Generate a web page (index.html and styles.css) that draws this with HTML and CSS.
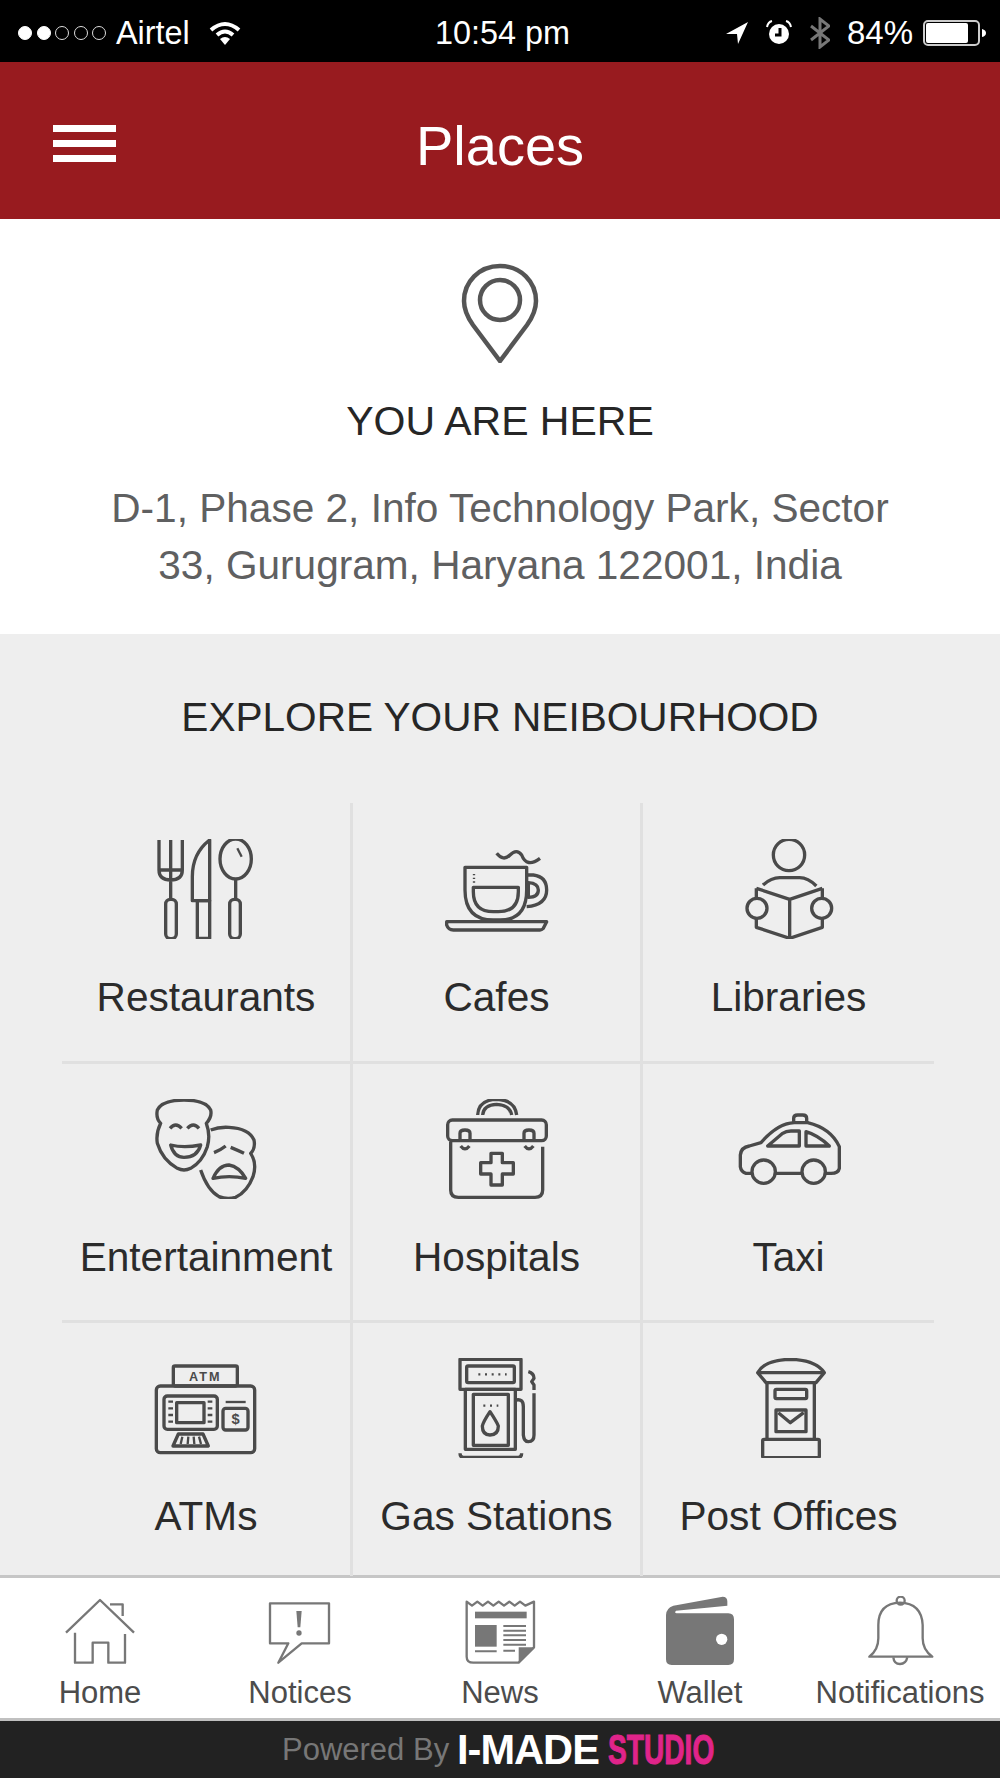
FILE: index.html
```html
<!DOCTYPE html>
<html lang="en">
<head>
    <meta charset="UTF-8">
    <meta name="viewport" content="width=device-width, initial-scale=1.0">
    <title>Places</title>
    <link rel="stylesheet" href="styles.css">
</head>
<body>
    <!-- iOS status bar -->
    <div class="status-bar">
        <div class="status-left">
            <span class="signal">
                <i class="dot on"></i><i class="dot on"></i><i class="dot"></i><i class="dot"></i><i class="dot"></i>
            </span>
            <span class="carrier">Airtel</span>
            <svg class="wifi" width="32" height="24" viewBox="0 0 32 24">
                <path class="wifi-arc" d="M2 9 Q16 -3 30 9"/>
                <path class="wifi-arc" d="M8 14 Q16 7 24 14"/>
                <path class="wifi-fill" d="M16 24 L11 18 Q16 14 21 18 Z"/>
            </svg>
        </div>
        <div class="status-time">10:54 pm</div>
        <div class="status-right">
            <svg width="22" height="22" viewBox="0 0 22 22"><path class="wifi-fill" d="M22 0 L0 12 L11 12 L12 22 Z"/></svg>
            <svg class="alarm" width="28" height="28" viewBox="0 0 28 28">
                <circle class="wifi-fill" cx="14" cy="15" r="10"/>
                <path class="alarm-hand" d="M15 9 V16 H10"/>
                <path class="alarm-ear" d="M2 8 Q3 3 7 2 M26 8 Q25 3 21 2"/>
            </svg>
            <svg class="bluetooth" width="20" height="32" viewBox="0 0 20 32"><path d="M1 9 L19 23 L10 30 V2 L19 9 L1 23"/></svg>
            <span class="battery-pct">84%</span>
            <svg width="64" height="26" viewBox="0 0 64 26">
                <rect class="battery-case" x="1" y="1" width="55" height="24" rx="4"/>
                <rect class="wifi-fill" x="3" y="3" width="42" height="20" rx="2"/>
                <path class="wifi-fill" d="M59 9 Q63 10 63 13 Q63 16 59 17 Z"/>
            </svg>
        </div>
    </div>

    <header class="app-header">
        <div class="hamburger"><span></span><span></span><span></span></div>
        <h1>Places</h1>
    </header>

    <section class="here">
        <svg class="pin" width="80" height="100" viewBox="0 0 80 100">
            <path d="M40 3 C19 3 4 19 4 38 C4 48 8 55 13 62 L40 98 L67 62 C72 55 76 48 76 38 C76 19 61 3 40 3 Z"/>
            <circle cx="40" cy="37" r="20"/>
        </svg>
        <h2>YOU ARE HERE</h2>
        <p class="address">D-1, Phase 2, Info Technology Park, Sector 33, Gurugram, Haryana 122001, India</p>
    </section>

    <section class="explore">
        <h2>EXPLORE YOUR NEIBOURHOOD</h2>
        <div class="place-grid">
            <div class="place">
                <svg class="place-icon" viewBox="261 87 360 300">
                    <path d="M300 90 V180 Q300 210 335 210 Q370 210 370 180 V90 M335 90 V268 M300 180 H370"/>
                    <rect x="320" y="268" width="32" height="118" rx="14"/>
                    <path d="M452 90 Q400 130 400 200 V272 H452 Z"/>
                    <rect x="415" y="272" width="37" height="113"/>
                    <ellipse cx="530" cy="147" rx="47" ry="60"/>
                    <path class="thin" d="M535 115 L548 140"/>
                    <path d="M530 207 V268"/>
                    <rect x="512" y="268" width="32" height="118" rx="14"/>
                </svg>
                <span>Restaurants</span>
            </div>
            <div class="place">
                <svg class="place-icon" viewBox="1311 87 360 300">
                    <path d="M1395 172 H1580 V240 Q1580 330 1500 330 H1480 Q1395 330 1395 240 Z"/>
                    <path d="M1420 232 H1555 V245 Q1555 305 1495 305 H1480 Q1420 305 1420 245 Z"/>
                    <path d="M1580 195 H1600 Q1640 200 1640 240 Q1640 285 1580 290"/>
                    <path d="M1585 218 Q1615 220 1615 240 Q1615 262 1585 262 Z"/>
                    <path d="M1340 335 H1640 L1630 355 Q1625 360 1620 360 H1360 Q1345 360 1340 345 Z"/>
                    <path d="M1490 130 Q1510 155 1530 135 Q1550 115 1565 135 Q1580 175 1620 145"/>
                    <path class="thin" stroke-dasharray="4 7" d="M1422 192 V220"/>
                </svg>
                <span>Cafes</span>
            </div>
            <div class="place">
                <svg class="place-icon" viewBox="688 87 360 300">
                    <circle cx="868" cy="135" r="47"/>
                    <path d="M790 225 Q815 203 840 203 H900 Q925 203 950 228"/>
                    <path d="M870 268 V382 M770 235 L870 268 L968 235 M770 235 V265 M968 235 V265 M770 322 V352 L870 385 L968 352 V322"/>
                    <circle cx="772" cy="295" r="30"/>
                    <circle cx="966" cy="295" r="30"/>
                </svg>
                <span>Libraries</span>
            </div>
            <div class="place">
                <svg class="place-icon" viewBox="141 87 360 300">
                    <path d="M255 90 Q190 90 175 120 Q170 145 185 160 Q170 190 175 220 Q190 270 235 295 Q255 305 275 295 Q310 275 325 230 Q335 195 322 160 Q340 140 335 120 Q320 90 255 90 Z"/>
                    <path d="M213 175 Q230 155 248 175 M265 175 Q283 155 300 175"/>
                    <path d="M215 225 Q255 235 305 225 Q295 262 255 262 Q225 262 215 225 Z"/>
                    <path d="M335 180 Q360 170 390 172 Q450 175 465 210 Q470 235 455 250 Q475 280 462 320 Q445 365 410 382 Q385 390 360 380 Q325 360 305 300"/>
                    <path d="M345 248 Q365 240 380 228 M395 232 Q415 240 435 250"/>
                    <path d="M342 325 Q360 285 390 285 Q420 290 440 325 Q390 315 342 325 Z"/>
                </svg>
                <span>Entertainment</span>
            </div>
            <div class="place">
                <svg class="place-icon" viewBox="1011 87 360 300">
                    <path d="M1133 135 Q1135 90 1190 88 Q1245 90 1250 135 M1148 135 Q1150 105 1190 103 Q1230 105 1235 135"/>
                    <rect x="1043" y="150" width="296" height="62" rx="14"/>
                    <path d="M1052 215 V360 Q1052 382 1075 382 H1305 Q1328 382 1328 360 V230"/>
                    <path d="M1080 212 V190 Q1080 180 1095 180 Q1110 180 1110 190 V212 M1082 228 Q1095 245 1108 228"/>
                    <path d="M1272 212 V190 Q1272 180 1287 180 Q1302 180 1302 190 V212 M1274 228 Q1287 245 1300 228"/>
                    <path d="M1173 250 H1207 V278 H1240 V312 H1207 V345 H1173 V312 H1142 V278 H1173 Z"/>
                </svg>
                <span>Hospitals</span>
            </div>
            <div class="place">
                <svg class="place-icon" viewBox="684 87 360 300">
                    <path d="M750 310 H735 Q720 305 718 290 V255 Q720 232 745 228 L780 218 Q830 160 880 158 H920 Q990 175 1015 230 V295 Q1012 310 990 310 H975 M825 310 H900"/>
                    <circle cx="788" cy="305" r="35"/>
                    <circle cx="938" cy="305" r="35"/>
                    <path d="M878 158 V145 Q878 135 890 135 H905 Q917 135 917 145 V158"/>
                    <path d="M800 228 L845 190 Q855 183 870 183 H895 V228 Z M915 185 Q950 195 985 228 H915 Z"/>
                </svg>
                <span>Taxi</span>
            </div>
            <div class="place">
                <svg class="place-icon" viewBox="51 54 360 300">
                    <rect x="133" y="78" width="192" height="60" rx="5"/>
                    <text class="icon-text" x="229" y="122" text-anchor="middle" font-size="38" letter-spacing="6">ATM</text>
                    <rect x="82" y="138" width="295" height="200" rx="12"/>
                    <rect x="105" y="168" width="160" height="100" rx="10"/>
                    <rect x="143" y="188" width="82" height="60"/>
                    <path class="thin" d="M118 185 H132 M118 205 H132 M118 225 H132 M118 245 H132 M236 185 H250 M236 205 H250 M236 225 H250 M236 245 H250"/>
                    <path d="M132 318 L148 282 H222 L238 318 Z"/>
                    <path class="thin" d="M160 290 L155 312 M178 290 L176 312 M194 290 L196 312 M210 290 L216 312"/>
                    <path class="thin" d="M290 186 H350"/>
                    <rect x="282" y="205" width="75" height="65" rx="8"/>
                    <text class="icon-text" x="320" y="252" text-anchor="middle" font-size="44">$</text>
                </svg>
                <span>ATMs</span>
            </div>
            <div class="place">
                <svg class="place-icon" viewBox="921 54 360 300">
                    <rect x="990" y="58" width="183" height="90"/>
                    <rect x="1010" y="78" width="143" height="50" rx="4"/>
                    <path class="thin" stroke-dasharray="6 14" d="M1045 103 H1130"/>
                    <rect x="1006" y="148" width="150" height="180"/>
                    <rect x="1030" y="163" width="105" height="153"/>
                    <path d="M990 340 Q990 352 1000 352 H1165 Q1175 352 1175 340"/>
                    <path class="thin" stroke-dasharray="6 14" d="M1060 197 H1105"/>
                    <path d="M1080 215 Q1100 245 1105 258 Q1105 285 1080 285 Q1057 285 1057 258 Q1060 245 1080 215 Z"/>
                    <path d="M1158 180 Q1180 175 1180 200 V285 Q1182 305 1195 305 Q1212 305 1212 285 V160 M1195 95 Q1212 100 1212 115 L1205 125 L1212 135 V150"/>
                </svg>
                <span>Gas Stations</span>
            </div>
            <div class="place">
                <svg class="place-icon" viewBox="684 54 360 300">
                    <path d="M770 98 Q790 60 868 58 Q945 60 970 98 L945 128 H795 Z M775 98 H965"/>
                    <path d="M798 128 V298 M940 128 V298"/>
                    <rect x="822" y="148" width="95" height="28" rx="4"/>
                    <rect x="825" y="210" width="90" height="65"/>
                    <path d="M832 218 L868 248 L908 218"/>
                    <rect x="785" y="298" width="170" height="55" rx="4"/>
                </svg>
                <span>Post Offices</span>
            </div>
        </div>
    </section>

    <nav class="tab-bar">
        <div class="tab">
            <svg class="tab-icon" viewBox="180 108 240 216">
                <path d="M198 218 L300 120 L402 218 M330 133 H368 V168 M225 218 V308 H278 V248 H325 V308 H375 V222"/>
            </svg>
            <span>Home</span>
        </div>
        <div class="tab">
            <svg class="tab-icon" viewBox="780 108 240 216">
                <path d="M810 130 H987 V250 H905 L835 308 L865 250 H810 Z"/>
                <path class="solid" d="M889 153 H905 L901 202 H893 Z"/>
                <circle class="solid" cx="897" cy="219" r="8"/>
            </svg>
            <span>Notices</span>
        </div>
        <div class="tab">
            <svg class="tab-icon" viewBox="1380 108 240 216">
                <path d="M1400 125 L1416 137 L1432 125 L1448 137 L1464 125 L1480 137 L1496 125 L1512 137 L1528 125 L1544 137 L1560 125 L1576 137 L1602 125 V262 L1556 308 H1420 Q1400 308 1400 290 Z"/>
                <rect class="solid" x="1425" y="155" width="155" height="20"/>
                <rect class="solid" x="1425" y="195" width="65" height="65"/>
                <path class="thin" d="M1510 198 H1578 M1510 212 H1578 M1510 226 H1578 M1510 240 H1578 M1510 254 H1578 M1425 274 H1490 M1510 272 H1545"/>
                <path class="solid" d="M1602 262 L1556 308 V262 Z"/>
            </svg>
            <span>News</span>
        </div>
        <div class="tab">
            <svg class="tab-icon" viewBox="480 108 240 216">
                <path class="solid" d="M498 165 Q498 145 520 137 L668 110 Q682 110 682 124 V137 L528 152 Q522 158 530 160 H685 Q702 160 702 178 V298 Q702 315 685 315 H515 Q498 315 498 298 Z"/>
                <circle class="hole" cx="665" cy="238" r="17"/>
            </svg>
            <span>Wallet</span>
        </div>
        <div class="tab">
            <svg class="tab-icon" viewBox="1080 108 240 216">
                <circle cx="1202" cy="122" r="12"/>
                <path d="M1108 290 Q1135 270 1135 235 V195 Q1135 130 1200 128 Q1265 130 1268 195 V235 Q1268 270 1297 290 Z"/>
                <path d="M1180 292 Q1182 312 1200 312 Q1218 312 1222 292"/>
            </svg>
            <span>Notifications</span>
        </div>
    </nav>

    <footer class="powered">
        <span class="powered-by">Powered By</span>
        <span class="logo-imade"><b>I-MADE</b></span>
        <span class="logo-studio"><b>STUDIO</b></span>
    </footer>
</body>
</html>
```

FILE: styles.css
```css
* {
    box-sizing: border-box;
}
body {
    margin: 0;
    width: 1000px;
    font-family: "Liberation Sans", Arial, sans-serif;
    background: #eeeeee;
}
h1, h2, p {
    margin: 0;
    font-weight: normal;
}

/* status bar */
.status-bar {
    height: 62px;
    background: #000;
    color: #fff;
    font-size: 32.4px;
    display: grid;
    grid-template-columns: 1fr auto 1fr;
    align-items: center;
    padding: 4px 13px 0 18px;
}
.status-left, .status-right {
    display: flex;
    align-items: center;
}
.status-right {
    justify-content: flex-end;
}
.status-right svg, .status-right span {
    margin-left: 17px;
}
.status-right .battery-pct {
    font-size: 33px;
    margin-left: 17px;
    margin-right: -7px;
}
.signal {
    display: flex;
    gap: 4.5px;
    margin-right: 10px;
}
.dot {
    width: 14px;
    height: 14px;
    border-radius: 50%;
    border: 1.5px solid #ddd;
}
.dot.on {
    background: #fff;
    border-color: #fff;
}
.wifi {
    margin-left: 19px;
}
.wifi-arc {
    fill: none;
    stroke: #fff;
    stroke-width: 4;
}
.wifi-fill {
    fill: #fff;
}
.alarm-hand {
    fill: none;
    stroke: #000;
    stroke-width: 3;
}
.alarm-ear {
    fill: none;
    stroke: #fff;
    stroke-width: 2;
}
.bluetooth path {
    fill: none;
    stroke: #777;
    stroke-width: 3;
}
.battery-case {
    fill: none;
    stroke: #ccc;
    stroke-width: 2;
}

/* red header */
.app-header {
    height: 157px;
    background: #981b1f;
    color: #fff;
    display: grid;
    grid-template-columns: 1fr auto 1fr;
    align-items: center;
    padding: 0 53px;
}
.app-header h1 {
    font-size: 56px;
    position: relative;
    top: 5px;
}
.hamburger {
    display: flex;
    flex-direction: column;
    gap: 8px;
    width: 63px;
    margin-top: 5px;
}
.hamburger span {
    height: 7px;
    background: #fff;
}

/* you are here */
.here {
    height: 415px;
    background: #fff;
    padding-top: 44px;
    text-align: center;
}
.pin {
    display: block;
    margin: 0 auto;
    fill: none;
    stroke: #555;
    stroke-width: 4.5;
}
.here h2 {
    font-size: 41px;
    line-height: 46px;
    margin-top: 35px;
    color: #262626;
}
.address {
    width: 810px;
    margin: 36px auto 0;
    font-size: 40.6px;
    line-height: 57px;
    color: #5f6061;
}

/* explore grid */
.explore {
    height: 941px;
    padding-top: 60px;
}
.explore h2 {
    font-size: 40.6px;
    line-height: 46px;
    text-align: center;
    color: #262626;
    margin-bottom: 63px;
}
.place-grid {
    display: grid;
    grid-template-columns: 291px 290px 291px;
    grid-template-rows: 261px 259px 253px;
    margin: 0 66px 0 62px;
}
.place {
    padding-top: 36px;
    display: flex;
    flex-direction: column;
    align-items: center;
    border-right: 3px solid #e0e0e0;
    border-bottom: 3px solid #e0e0e0;
    font-size: 40.6px;
    line-height: 46px;
    color: #2b2b2b;
    white-space: nowrap;
}
.place:nth-child(n+4) {
    padding-top: 35px;
}
.place:nth-child(3n) {
    border-right: none;
}
.place:nth-child(n+7) {
    border-bottom: none;
}
.place-icon {
    width: 120px;
    height: 100px;
    flex: none;
    margin-bottom: 35px;
    fill: none;
    stroke: #4a4a4a;
    stroke-width: 10;
    stroke-linejoin: round;
}
.place-icon .thin {
    stroke-width: 7;
}
.icon-text {
    fill: #4a4a4a;
    stroke: none;
    font-weight: bold;
    font-family: "Liberation Sans", Arial, sans-serif;
}

/* bottom tabs */
.tab-bar {
    height: 146px;
    background: #fff;
    border-top: 3px solid #c6c6c6;
    border-bottom: 3px solid #c0c0c0;
    display: grid;
    grid-template-columns: repeat(5, 200px);
}
.tab {
    padding-top: 18px;
    display: flex;
    flex-direction: column;
    align-items: center;
    font-size: 31px;
    line-height: 36px;
    color: #4c4c4c;
    white-space: nowrap;
}
.tab-icon {
    width: 80px;
    height: 72px;
    flex: none;
    margin-bottom: 7px;
    fill: none;
    stroke: #777;
    stroke-width: 7;
    stroke-linejoin: round;
}
.tab-icon .solid {
    fill: #777;
    stroke: none;
}
.tab-icon .thin {
    stroke-width: 6;
}
.tab-icon .hole {
    fill: #fff;
    stroke: none;
}

/* powered by strip */
.powered {
    height: 57px;
    background: #222;
    display: flex;
    align-items: center;
    padding-left: 282px;
}
.powered-by {
    font-size: 31px;
    color: #777;
    margin-right: 8px;
}
.logo-imade, .logo-studio {
    display: block;
    font-size: 42px;
    line-height: 48px;
    height: 48px;
}
.logo-imade b, .logo-studio b {
    display: inline-block;
    transform-origin: left center;
}
.logo-imade {
    width: 151px;
    color: #fff;
}
.logo-imade b {
    letter-spacing: -1px;
    transform: scaleX(0.99);
}
.logo-studio {
    width: 107px;
    color: #e0248a;
}
.logo-studio b {
    transform: scaleX(0.67);
    -webkit-text-stroke: 1px #e0248a;
}
```
